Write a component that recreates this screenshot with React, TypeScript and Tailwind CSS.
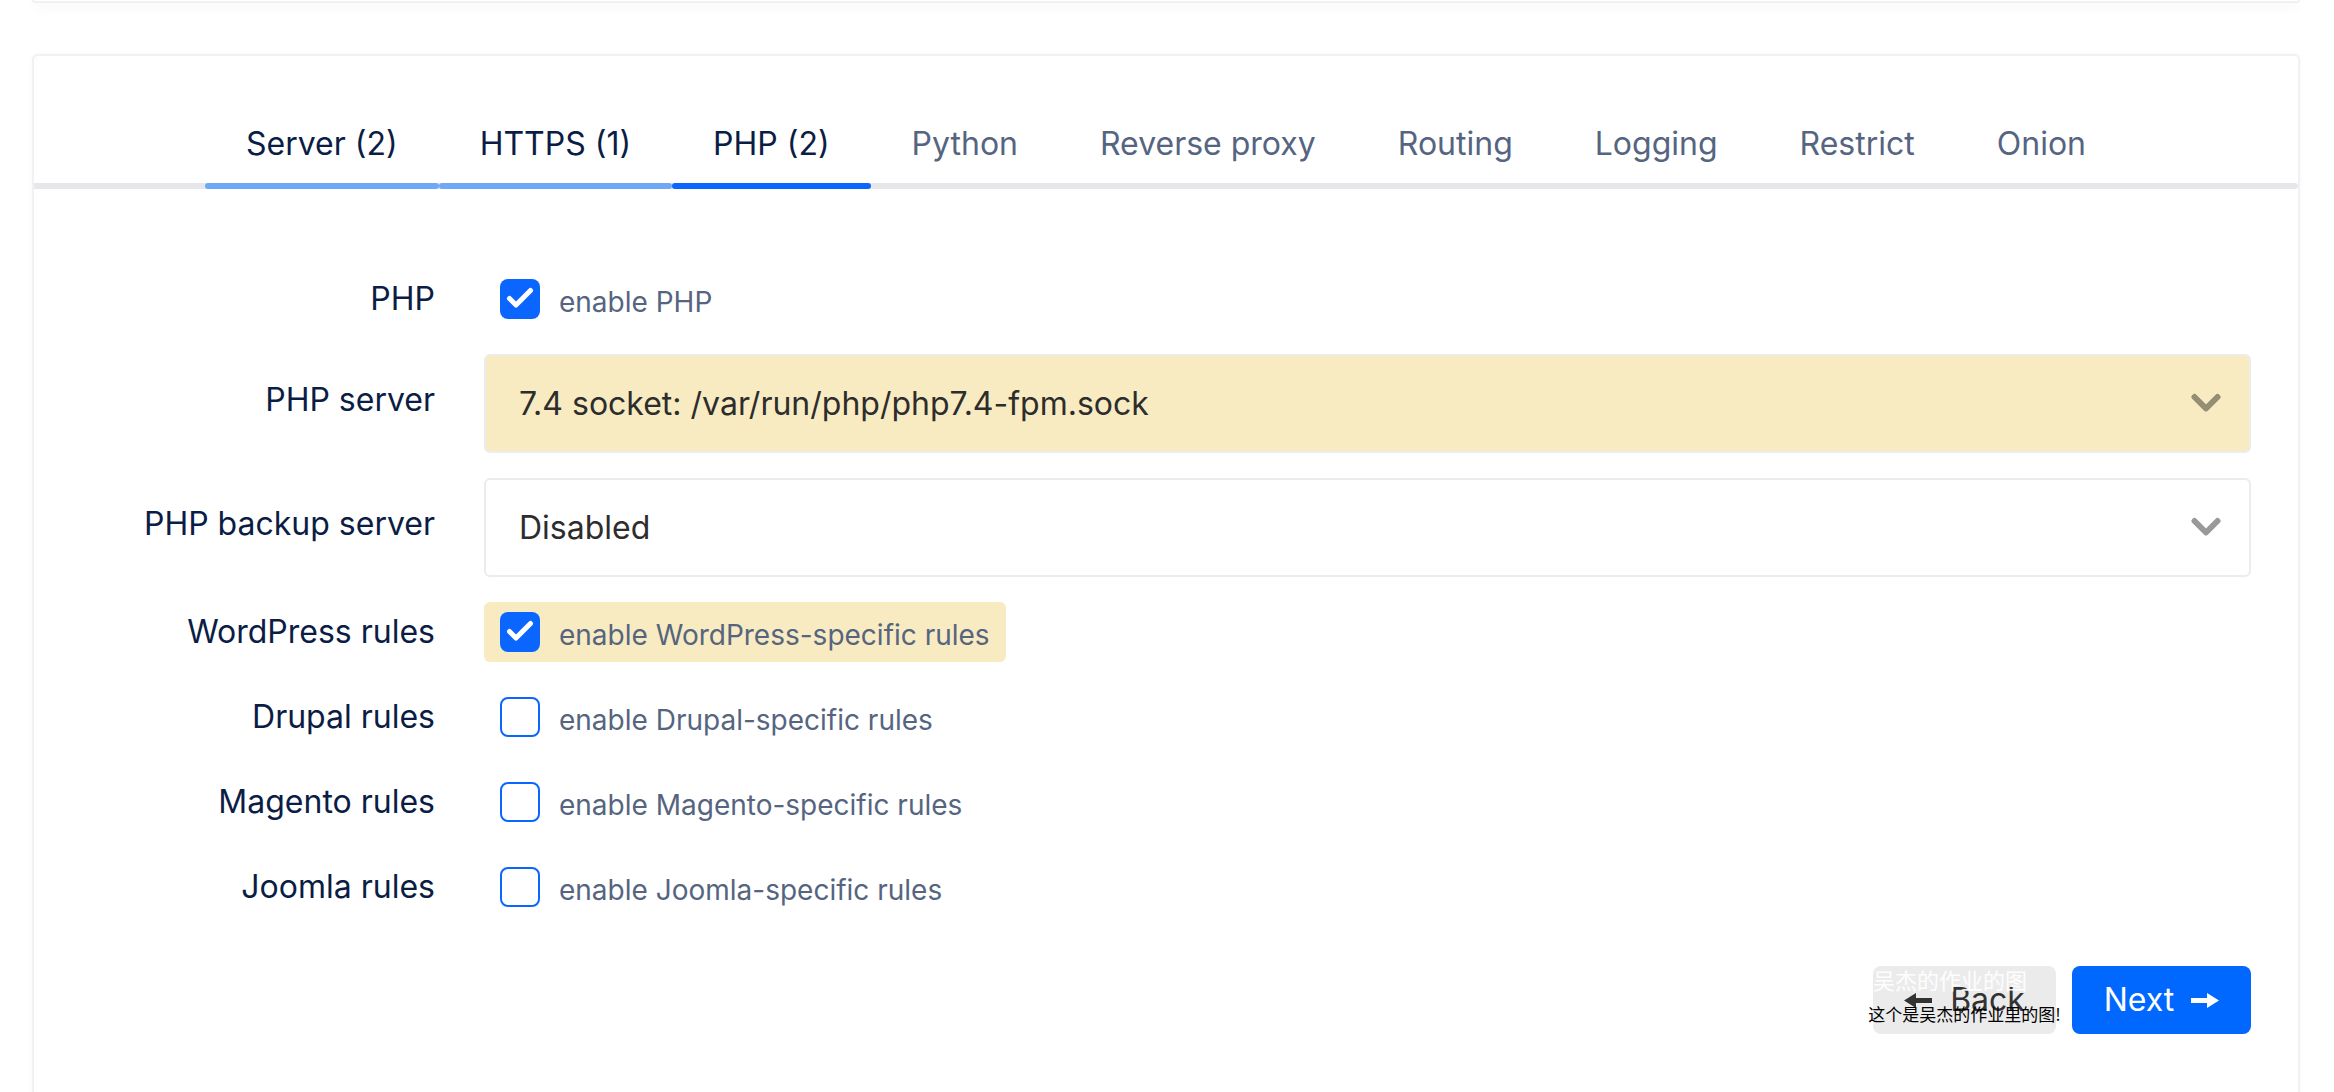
import React from "react";

const tabs = [
  { name: "Server (2)", state: "done" },
  { name: "HTTPS (1)", state: "done" },
  { name: "PHP (2)", state: "active" },
  { name: "Python", state: "idle" },
  { name: "Reverse proxy", state: "idle" },
  { name: "Routing", state: "idle" },
  { name: "Logging", state: "idle" },
  { name: "Restrict", state: "idle" },
  { name: "Onion", state: "idle" },
];

function Check({ checked }: { checked: boolean }) {
  if (checked) {
    return (
      <span className="w-[40px] h-[40px] rounded-lg bg-[#0a66ff] flex items-center justify-center shrink-0">
        <svg width="40" height="40" viewBox="0 0 40 40">
          <path d="M9.5 19.5 L16 26 L30.5 11.5" fill="none" stroke="white" strokeWidth="5" strokeLinecap="round" strokeLinejoin="round" />
        </svg>
      </span>
    );
  }
  return <span className="w-[40px] h-[40px] rounded-lg border-2 border-[#0a66ff] bg-white shrink-0" />;
}

function Chevron() {
  return (
    <svg width="30" height="21" viewBox="0 0 30 21" className="text-black/40">
      <path d="M3.5 4 L15 15.5 L26.5 4" fill="none" stroke="currentColor" strokeWidth="6" strokeLinecap="round" strokeLinejoin="round" />
    </svg>
  );
}

function Arrow({ dir, color }: { dir: "left" | "right"; color: string }) {
  return (
    <svg width="28" height="15" viewBox="0 0 28 15" className={dir === "left" ? "-scale-x-100" : ""}>
      <rect x="0" y="5" width="18" height="5" fill={color} />
      <path d="M16 0 L28 7.5 L16 15 Z" fill={color} />
    </svg>
  );
}

function CheckRow({ label, text, checked, highlight }: { label: string; text: string; checked: boolean; highlight?: boolean }) {
  return (
    <div className="flex items-center h-[60px]">
      <div className="w-[401px] text-right text-[32px] leading-[48px] text-[#0b1d45]">{label}</div>
      <div className="ml-[49px] flex-1 flex">
        <div className={`flex items-center h-[60px] pl-[16px] pr-[16px] gap-[19px] rounded-md ${highlight ? "bg-[#f8ebc1]" : ""}`}>
          <Check checked={checked} />
          <span className="mt-[5px] text-[28px] leading-[40px] text-[#56657f]">{text}</span>
        </div>
      </div>
    </div>
  );
}

function SelectRow({ label, value, highlight }: { label: string; value: string; highlight?: boolean }) {
  return (
    <div className="flex items-start">
      <div className="w-[401px] text-right text-[32px] leading-[48px] text-[#0b1d45] pt-[22px]">{label}</div>
      <div className="ml-[49px] flex-1">
        <div className={`h-[99px] border-2 border-[#ececec] rounded-md flex items-center justify-between pl-[33px] pr-[28px] ${highlight ? "bg-[#f8ebc1]" : "bg-white"}`}>
          <span className="text-[32px] leading-[48px] text-[#2d2d2d]">{value}</span>
          <Chevron />
        </div>
      </div>
    </div>
  );
}

export default function App() {
  return (
    <div className="min-h-screen bg-white pl-[32px] pr-[34px] font-['Inter','Liberation_Sans',sans-serif] overflow-hidden">
      <div className="h-[3px] bg-white rounded-b-md shadow-[0_4px_12px_rgba(0,0,0,0.07)] border-x-2 border-b-2 border-[#f1f1f1]" />

      <div className="mt-[51px] border-2 border-[#f1f1f1] rounded-md shadow-[0_0_4px_rgba(0,0,0,0.04)] pt-[64px] pb-[200px]">
        {/* Tabs */}
        <div className="relative">
          <div className="flex justify-center relative z-10">
            {tabs.map((t) => (
              <div key={t.name} className="flex flex-col">
                <div className={`px-[41px] pb-[15px] text-[32px] leading-[48px] whitespace-nowrap ${t.state === "idle" ? "text-[#556581]" : "text-[#0b1d45]"}`}>
                  {t.name}
                </div>
                <div className={`h-[6px] rounded-full ${t.state === "active" ? "bg-[#0a66ff]" : t.state === "done" ? "bg-[#70a8f8]" : "bg-transparent"}`} />
              </div>
            ))}
          </div>
          <div className="h-[6px] -mt-[6px] bg-[#e5e7eb] rounded-r-full" />
        </div>

        {/* Form */}
        <div className="pr-[47px] pt-[80px] flex flex-col gap-[25px]">
          <CheckRow label="PHP" text="enable PHP" checked />
          <SelectRow label="PHP server" value="7.4 socket: /var/run/php/php7.4-fpm.sock" highlight />
          <SelectRow label="PHP backup server" value="Disabled" />
          <CheckRow label="WordPress rules" text="enable WordPress-specific rules" checked highlight />
          <CheckRow label="Drupal rules" text="enable Drupal-specific rules" checked={false} />
          <CheckRow label="Magento rules" text="enable Magento-specific rules" checked={false} />
          <CheckRow label="Joomla rules" text="enable Joomla-specific rules" checked={false} />
        </div>

        {/* Buttons */}
        <div className="pr-[47px] mt-[49px] flex justify-end gap-[16px]">
          <div className="relative">
            <button className="h-[68px] w-[183px] rounded-lg bg-[#ebebeb] flex items-center justify-center gap-[18px] text-[32px] text-[#333333]">
              <Arrow dir="left" color="#333333" />
              <span>Back</span>
            </button>
            <span className="absolute left-0 top-[1px] text-[22px] leading-[24px] text-white/90 whitespace-nowrap font-['Noto_Sans_CJK_SC',sans-serif]">
              吴杰的作业的图
            </span>
            <span className="absolute left-1/2 -translate-x-1/2 top-[37px] text-[17px] leading-[22px] text-black whitespace-nowrap font-['Noto_Sans_CJK_SC',sans-serif]">
              这个是吴杰的作业里的图!
            </span>
          </div>
          <button className="h-[68px] w-[179px] rounded-lg bg-[#0068ff] flex items-center justify-center gap-[17px] text-[32px] text-white">
            <span>Next</span>
            <Arrow dir="right" color="white" />
          </button>
        </div>
      </div>
    </div>
  );
}
